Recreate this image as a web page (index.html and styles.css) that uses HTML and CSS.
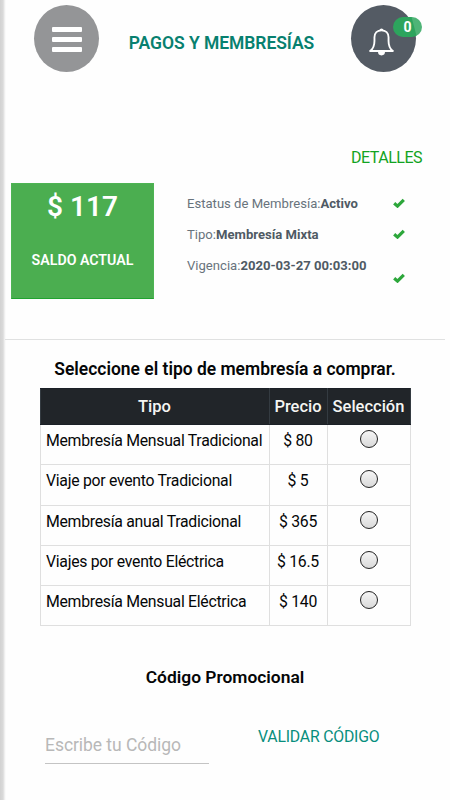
FILE: index.html
```html
<!DOCTYPE html>
<html lang="es">
<head>
  <meta charset="UTF-8" />
  <meta name="viewport" content="width=device-width, initial-scale=1.0"/>
  <title>Pagos y Membresías</title>
  <link rel="stylesheet" href="styles.css">
</head>
<body>
  <header class="topbar">
    <button class="round-btn menu-btn" aria-label="Menú">
      <span></span>
      <span></span>
      <span></span>
    </button>
    <h1 class="page-title">PAGOS Y MEMBRESÍAS</h1>
    <button class="round-btn bell-btn" aria-label="Notificaciones">
      <svg class="bell" viewBox="0 0 24 28">
        <path d="M10.6 3.2a1.5 1.5 0 0 1 2.8 0M1 23.2c3.1-2.4 4.2-4.8 4.2-9.8V10c0-4.2 2.8-6.8 6.8-6.8s6.8 2.6 6.8 6.8v3.4c0 5 1.1 7.4 4.2 9.8z" fill="none" stroke="#fff" stroke-width="1.8" stroke-linejoin="round"/>
        <path d="M8.6 24h6.8a3.4 3.4 0 0 1-6.8 0z" fill="#fff"/>
      </svg>
      <span class="badge">0</span>
    </button>
  </header>

  <section class="summary">
    <h2 class="details-title">DETALLES</h2>
    <div class="summary-row">
      <div class="balance">
        <div class="amount">$ 117</div>
        <div class="label">SALDO ACTUAL</div>
      </div>
      <ul class="details">
        <li>
          <span>Estatus de Membresía:<b>Activo</b></span>
          <svg class="check" viewBox="0 0 12 10"><path d="M1.2 5.2 4.5 8.1 10.8 1.9" /></svg>
        </li>
        <li>
          <span>Tipo:<b>Membresía Mixta</b></span>
          <svg class="check" viewBox="0 0 12 10"><path d="M1.2 5.2 4.5 8.1 10.8 1.9" /></svg>
        </li>
        <li class="tall">
          <span>Vigencia:<b>2020-03-27 00:03:00</b></span>
          <svg class="check" viewBox="0 0 12 10"><path d="M1.2 5.2 4.5 8.1 10.8 1.9" /></svg>
        </li>
      </ul>
    </div>
  </section>

  <section class="plans">
    <h3 class="plans-title">Seleccione el tipo de membresía a comprar.</h3>
    <table>
      <thead>
        <tr>
          <th class="col-type">Tipo</th>
          <th class="col-price">Precio</th>
          <th>Selección</th>
        </tr>
      </thead>
      <tbody>
        <tr>
          <td>Membresía Mensual Tradicional</td>
          <td>$ 80</td>
          <td><input type="radio" name="plan"></td>
        </tr>
        <tr>
          <td>Viaje por evento Tradicional</td>
          <td>$ 5</td>
          <td><input type="radio" name="plan"></td>
        </tr>
        <tr>
          <td>Membresía anual Tradicional</td>
          <td>$ 365</td>
          <td><input type="radio" name="plan"></td>
        </tr>
        <tr>
          <td>Viajes por evento Eléctrica</td>
          <td>$ 16.5</td>
          <td><input type="radio" name="plan"></td>
        </tr>
        <tr>
          <td>Membresía Mensual Eléctrica</td>
          <td>$ 140</td>
          <td><input type="radio" name="plan"></td>
        </tr>
      </tbody>
    </table>
  </section>

  <section class="promo">
    <h3 class="promo-title">Código Promocional</h3>
    <div class="promo-form">
      <input class="promo-input" type="text" placeholder="Escribe tu Código">
      <button class="promo-btn">VALIDAR CÓDIGO</button>
    </div>
  </section>
</body>
</html>
```
FILE: styles.css
```css
* {
  box-sizing: border-box;
}

body {
  margin: 0;
  width: 450px;
  height: 800px;
  overflow: hidden;
  background: linear-gradient(to right, #d2d2d2 0, #dadada 3px, #f6f6f6 5px, #fefefe 6px);
  font-family: Roboto, sans-serif;
  color: #050607;
}

h1, h2, h3, ul {
  margin: 0;
  padding: 0;
}

button {
  padding: 0;
  border: none;
  background: none;
  font-family: inherit;
}

/* header */
.topbar {
  display: flex;
  justify-content: space-between;
  height: 140px;
  padding: 5px 34px 0;
}

.round-btn {
  width: 65px;
  height: 67px;
  border-radius: 50%;
}

.menu-btn {
  display: flex;
  flex-direction: column;
  align-items: center;
  justify-content: center;
  gap: 5px;
  padding-top: 2px;
  background: #949597;
}

.menu-btn span {
  width: 30px;
  height: 5px;
  border-radius: 1px;
  background: #fff;
}

.page-title {
  padding: 28px 7px 0 0;
  font-size: 17.5px;
  font-weight: 600;
  line-height: 20px;
  letter-spacing: -0.05px;
  white-space: nowrap;
  color: #07806f;
}

.bell-btn {
  position: relative;
  background: #545b64;
}

.bell {
  display: block;
  width: 25px;
  height: 29px;
  margin: 5px auto 0 18px;
}

.badge {
  position: absolute;
  top: 12px;
  left: 42px;
  width: 29px;
  height: 20px;
  border-radius: 10px;
  background: linear-gradient(75deg, #2da45d 68%, #4fb477 71%);
  color: #fff;
  font-size: 14px;
  font-weight: 700;
  line-height: 20px;
}

/* balance and membership details */
.summary {
  height: 200px;
  margin: 0 5px;
  padding: 8px 0 0 6px;
  border-bottom: 1px solid #e0e1e1;
}

.details-title {
  padding-right: 18px;
  text-align: right;
  font-size: 16px;
  font-weight: 400;
  line-height: 20px;
  letter-spacing: -0.5px;
  margin-right: 5px;
  color: #12a322;
}

.summary-row {
  display: flex;
  margin-top: 15px;
}

.balance {
  width: 143px;
  height: 116px;
  padding-top: 7px;
  border: 1px solid #4db453;
  border-bottom-color: #20a32f;
  background: #4bae50;
  color: #fff;
  text-align: center;
}

.amount {
  font-size: 28px;
  font-weight: 600;
  line-height: 31px;
}

.label {
  margin-top: 28px;
  font-size: 14.2px;
  font-weight: 600;
  line-height: 20px;
}

.details {
  width: 218px;
  margin-left: 33px;
  padding-top: 5px;
  list-style: none;
  font-size: 13.1px;
  color: #68737c;
}

.details li {
  display: flex;
  justify-content: space-between;
  align-items: center;
  height: 31px;
  white-space: nowrap;
}

.details b {
  color: #4f5a64;
}

.check {
  width: 12px;
  height: 10px;
  margin-bottom: 2px;
}

.details li.tall .check {
  margin-top: 27px;
}

.check path {
  fill: none;
  stroke: #2da73b;
  stroke-width: 3.2;
}

/* plans table */
.plans {
  padding: 18px 40px 0;
}

.plans-title {
  text-align: center;
  font-size: 17.45px;
  font-weight: 600;
  line-height: 22px;
  white-space: nowrap;
}

table {
  width: 371px;
  margin-top: 8px;
  border-collapse: collapse;
  table-layout: fixed;
  font-size: 15.8px;
  letter-spacing: -0.28px;
}

th {
  height: 36px;
  padding: 0 1px 1px 0;
  border: 1px solid #343b41;
  border-color: #1b2027 #343b41;
  background: #212529;
  color: #f5f5f3;
  font-size: 16.5px;
  font-weight: 500;
  letter-spacing: 0;
}

.col-type {
  width: 229px;
}

.col-price {
  width: 58px;
}

td {
  height: 40.3px;
  padding: 0 1px 8px 0;
  border: 1px solid #dfdfdf;
  text-align: center;
  white-space: nowrap;
}

td:first-child {
  padding-left: 5px;
  text-align: left;
}

td input {
  display: block;
  appearance: none;
  width: 18px;
  height: 18px;
  margin: -3px auto 0;
  border: 1px solid #222;
  border-radius: 50%;
  background: linear-gradient(#f6f6f6, #d9d9d9);
}

/* promo code */
.promo {
  padding: 40px 45px 0;
}

.promo-title {
  text-align: center;
  font-size: 17.4px;
  font-weight: 600;
  line-height: 22px;
}

.promo-form {
  display: flex;
  align-items: flex-start;
  gap: 49px;
  margin-top: 38px;
}

.promo-input {
  width: 164px;
  height: 38px;
  padding: 0;
  border: none;
  border-bottom: 1.5px solid #c4c4c4;
  background: none;
  font-family: inherit;
  font-size: 17.5px;
  letter-spacing: -0.05px;
}

.promo-input::placeholder {
  color: #b8b8b8;
}

.promo-btn {
  font-size: 15.8px;
  line-height: 22px;
  letter-spacing: -0.2px;
  white-space: nowrap;
  color: #078e7d;
}
```
